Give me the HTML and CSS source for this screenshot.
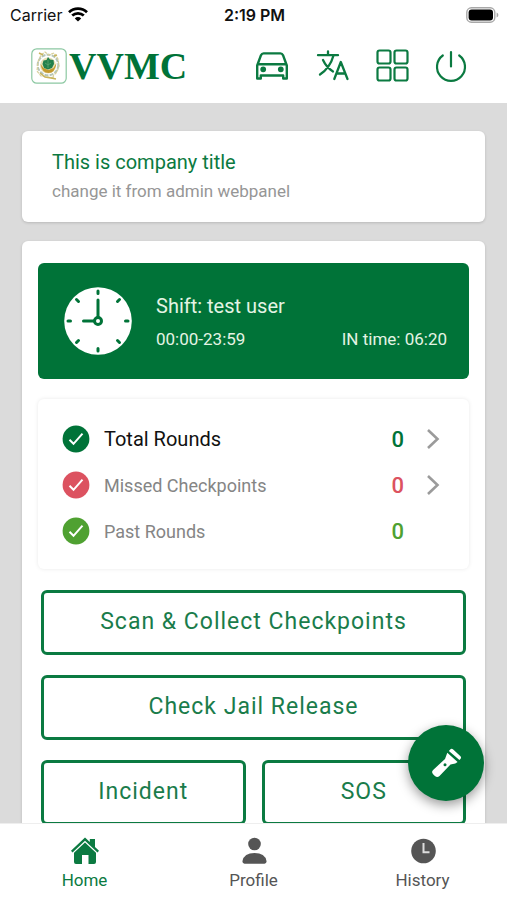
FILE: index.html
```html
<!DOCTYPE html>
<html lang="en">
<head>
<meta charset="utf-8">
<meta name="viewport" content="width=device-width, initial-scale=1">
<title>VVMC</title>
<link rel="stylesheet" href="styles.css">
</head>
<body>
<div class="app">
  <div class="status">
    <div class="carrier">
      <span>Carrier</span>
      <svg width="20" height="15" viewBox="0 0 20 15" fill="none" stroke="#000" stroke-width="2.7"><path d="M1 5.3a13 13 0 0 1 18 0M4.2 8.6a8.4 8.4 0 0 1 11.6 0"/><path d="M10 14.6 6.8 11.4a4.6 4.6 0 0 1 6.4 0z" fill="#000" stroke="none"/></svg>
    </div>
    <span class="time">2:19 PM</span>
    <svg class="battery" width="33" height="16" viewBox="0 0 33 16"><rect x=".8" y=".8" width="28" height="14.4" rx="4.6" fill="#fff" stroke="#a8a8a8" stroke-width="1.4"/><rect x="2.6" y="2.6" width="24.4" height="10.8" rx="3"/><path d="M30.6 5.6q1.8.6 1.8 2.4t-1.8 2.4z" fill="#a8a8a8"/></svg>
  </div>

  <header class="header">
    <div class="brand">
      <svg width="36" height="36" viewBox="0 0 36 36" fill="none">
        <rect x=".8" y=".8" width="34.4" height="34.4" rx="5" fill="#fff" stroke="#8cc8a2" stroke-width="1.2"/>
        <circle cx="17" cy="17" r="10.3" stroke="#b5c5b8" stroke-width="2" stroke-dasharray="4 1.2"/>
        <path d="M7 14 10 7l4-3 4 3 5-2 4 6 1 7-2 6-4 4 1 2-6-1-7-1-4-5z" stroke="#d8cf9a" stroke-width="1.2" stroke-dasharray="3 1"/>
        <path d="M8 5l4 2M26 7l-3 1M9 25l5 4 6 1 5 1" stroke="#c8b45c" stroke-width="1.6"/>
        <circle cx="17" cy="17.5" r="8" fill="#e9dfb4"/>
        <path d="M9.500 16q1.500 9 8 9t8-10l-3 5-5 2-5-2z" fill="#c49a2e"/>
        <path d="M17 9l2 2.500 3.500.5.500 4-2 4-4 1.500-4-1.500-1.500-4 1-3.500 3-.5z" fill="#23804b"/>
        <path d="M17 12v8M14 15l3 2 3-2" stroke="#5da66f" stroke-width=".8"/>
      </svg>
      <span class="brand-name">VVMC</span>
    </div>
    <nav class="tools" aria-label="Tools">
      <button type="button" aria-label="Vehicle"><svg width="36" height="36" viewBox="-1 0 36 36" fill="none" stroke="#0b7a41" stroke-width="2.4" stroke-linejoin="round"><path d="M3.200 17.500 7 7.200Q7.800 5.400 9.600 5.400h16.800q1.800 0 2.600 1.800l3.800 10.300V30.500h-3.600V27.500H6.800v3H3.200zM3.600 16.300h28.800"/><circle cx="9.200" cy="21.300" r="1.700" fill="#0b7a41"/><circle cx="26.800" cy="21.300" r="1.700" fill="#0b7a41"/></svg></button>
      <button type="button" aria-label="Language"><svg width="36" height="36" viewBox="-2 0 36 36" fill="none" stroke="#0b7a41" stroke-width="2.300" stroke-linecap="round" stroke-linejoin="round"><path d="M3 7.200h20M13 3.500v3.700M18.500 7.500Q15 20 5 26.500M8 12q3.500 7.500 10 11.500M19.300 31l6.500-17L32.500 31M22 25.500h8.200"/></svg></button>
      <button type="button" aria-label="Menu"><svg width="36" height="36" viewBox="-2 0 36 36" fill="none" stroke="#0b7a41" stroke-width="2.200"><rect x="2.500" y="2.500" width="13" height="13" rx="2"/><rect x="19.500" y="2.500" width="13" height="13" rx="2"/><rect x="2.500" y="19.500" width="13" height="13" rx="2"/><rect x="19.500" y="19.500" width="13" height="13" rx="2"/></svg></button>
      <button type="button" aria-label="Log out"><svg width="36" height="36" viewBox="0 0 36 36" fill="none" stroke="#0b7a41" stroke-width="2.200" stroke-linecap="round"><path d="M18 4v14.500M9.800 7.500a14 14 0 1 0 16.400 0"/></svg></button>
    </nav>
  </header>

  <main class="content">
    <section class="card company">
      <h1>This is company title</h1>
      <p>change it from admin webpanel</p>
    </section>

    <section class="card panel">
      <div class="shift">
        <svg width="68" height="68" viewBox="0 0 68 68" fill="none" stroke="#007338" stroke-width="3" stroke-linecap="round">
          <circle cx="34" cy="34" r="33.800" fill="#fff" stroke="none"/>
          <path d="M34 4v2.500M34 61.500V64M4 34h2.500M61.500 34H64M12.500 12.500l2 2M55.500 12.500l-2 2M12.500 55.500l2-2M55.500 55.500l-2-2M34 13v17M30 34H19.500"/>
          <circle cx="34" cy="34" r="3.500"/>
        </svg>
        <div class="shift-info">
          <h2>Shift: test user</h2>
          <div class="shift-times"><span>00:00-23:59</span><span>IN time: 06:20</span></div>
        </div>
      </div>

      <div class="stats">
        <a class="stat total" href="#total">
          <svg class="tick" width="28" height="28" viewBox="0 0 28 28"><circle cx="14" cy="14" r="13.400" fill="currentColor"/><path d="M7.500 14.800l4 4L20.500 8.700" fill="none" stroke="#fff" stroke-width="2"/></svg>
          <span class="label">Total Rounds</span><span class="count">0</span>
          <svg class="chevron" width="14" height="22" viewBox="0 0 14 22"><path d="M2 2l9.500 9L2 20"/></svg>
        </a>
        <a class="stat missed" href="#missed">
          <svg class="tick" width="28" height="28" viewBox="0 0 28 28"><circle cx="14" cy="14" r="13.400" fill="currentColor"/><path d="M7.500 14.800l4 4L20.500 8.700" fill="none" stroke="#fff" stroke-width="2"/></svg>
          <span class="label">Missed Checkpoints</span><span class="count">0</span>
          <svg class="chevron" width="14" height="22" viewBox="0 0 14 22"><path d="M2 2l9.500 9L2 20"/></svg>
        </a>
        <div class="stat past">
          <svg class="tick" width="28" height="28" viewBox="0 0 28 28"><circle cx="14" cy="14" r="13.400" fill="currentColor"/><path d="M7.500 14.800l4 4L20.500 8.700" fill="none" stroke="#fff" stroke-width="2"/></svg>
          <span class="label">Past Rounds</span><span class="count">0</span>
          <span class="chevron"></span>
        </div>
      </div>

      <div class="actions">
        <button type="button">Scan &amp; Collect Checkpoints</button>
        <button type="button">Check Jail Release</button>
        <div class="pair">
          <button type="button">Incident</button>
          <button type="button">SOS</button>
        </div>
      </div>
    </section>
  </main>

  <div class="bottom">
    <button class="fab" type="button" aria-label="Flashlight"><svg width="36" height="36" viewBox="0 0 36 36" fill="#fff"><path d="M22 4.800q1.500-1.800 3.200-.3l7 6.400q1.600 1.500.2 3.200l-1 1L20.900 5.900zM19.300 7.800l10.300 9.100-2.300 1.700-4.800.9L11.500 31q-2.200 2.100-4.600 0l-1.800-1.700q-2-2.200 0-4.400L17 14z"/><circle cx="17" cy="19.800" r="1.500" fill="#007338"/></svg></button>
    <nav class="tabs" aria-label="Main">
      <a class="active" href="#home"><svg width="30" height="30" viewBox="0 0 30 30" fill="currentColor"><path d="M15 1.500 19.800 6V3H25v8l4 3.700-1.500 1.700L15 4.800 2.500 16.400 1 14.700z"/><path d="M15 6.500 26 16.700V26q0 2-2 2h-5.500v-9h-6.500v9H6q-2 0-2-2v-9.300z"/></svg><span>Home</span></a>
      <a href="#profile"><svg width="30" height="30" viewBox="0 0 30 30" fill="currentColor"><circle cx="15.500" cy="8" r="6.300"/><path d="M3.500 25Q5 17 15.500 17T27.500 25q.3 2.700-2 2.700h-20q-2.300 0-2-2.700z"/></svg><span>Profile</span></a>
      <a href="#history"><svg width="30" height="30" viewBox="0 0 30 30"><circle cx="15.500" cy="15" r="12.300" fill="currentColor"/><path d="M15.500 7v9.200h6" fill="none" stroke="#ddd" stroke-width="2"/></svg><span>History</span></a>
    </nav>
  </div>
</div>
</body>
</html>
```
FILE: styles.css
```css
* { box-sizing: border-box; }
body {
  margin: 0;
  font-family: Roboto, sans-serif;
  background: #fff;
}
h1, h2, p { margin: 0; font-weight: 400; }
button { font: inherit; cursor: pointer; }
a { color: inherit; text-decoration: none; }
svg { display: block; flex: none; }

.app {
  height: 100vh;
  display: flex;
  flex-direction: column;
}

/* Status bar */
.status {
  flex: none;
  display: grid;
  grid-template-columns: 1fr auto 1fr;
  align-items: center;
  height: 29px;
  padding: 0 8px 0 10px;
  font: 400 16px/20px Inter, sans-serif;
  color: #111;
}
.carrier { display: flex; align-items: center; gap: 6px; }
.time { font-weight: 600; }
.battery { justify-self: end; }

/* Header */
.header {
  flex: none;
  display: flex;
  align-items: center;
  justify-content: space-between;
  height: 74px;
  padding: 0 38px 0 31px;
}
.brand { display: flex; align-items: center; gap: 2px; }
.brand-name {
  font: 700 38px/44px "Liberation Serif", serif;
  color: #007338;
}
.tools { display: flex; gap: 24px; }
.tools button { padding: 0; border: 0; background: none; }

/* Scrolling content */
.content {
  flex: 1;
  min-height: 0;
  overflow: hidden;
  display: flex;
  flex-direction: column;
  gap: 19px;
  padding: 28px 22px 0;
  background: #dbdbdb;
}
.card {
  flex: none;
  border-radius: 6px;
  background: #fff;
  box-shadow: 0 1px 3px rgba(0, 0, 0, .16);
}
.company { padding: 17px 30px 15px; }
.company h1 { font-size: 20px; line-height: 28px; color: #0b7a41; }
.company p { font-size: 17px; line-height: 31px; color: #969696; }
.panel { padding: 22px 16px; }

.shift {
  display: flex;
  align-items: center;
  gap: 24px;
  min-height: 116px;
  padding: 0 22px 0 26px;
  border-radius: 6px;
  background: #007338;
  color: #e4f4e4;
}
.shift-info { flex: 1; }
.shift h2 { font-size: 20px; line-height: 36px; }
.shift-times {
  display: flex;
  justify-content: space-between;
  font-size: 17px;
  line-height: 31px;
}

.stats {
  margin-top: 20px;
  padding: 17px 29px 15px 24px;
  border-radius: 6px;
  box-shadow: 0 0 4px rgba(0, 0, 0, .09);
}
.stat {
  display: flex;
  align-items: center;
  min-height: 46px;
  font-size: 18px;
}
.label { flex: 1; margin-left: 14px; color: #858585; }
.count { font-size: 22px; font-weight: 500; }
.chevron {
  width: 14px;
  margin-left: 22px;
  fill: none;
  stroke: #9b9b9b;
  stroke-width: 2.6;
}
.total { font-size: 20px; color: #007338; }
.total .label { color: #111; }
.missed { color: #dc5260; }
.past { color: #4fa131; }

.actions {
  display: flex;
  flex-direction: column;
  gap: 20px;
  padding: 0 3px;
  margin-top: 21px;
}
.actions button {
  height: 65px;
  padding: 0 6px 2px;
  border: 3px solid #0b7a41;
  border-radius: 6px;
  background: #fff;
  color: #1a7c4b;
  font-size: 23px;
  letter-spacing: 1px;
}
.pair { display: grid; grid-template-columns: 1fr 1fr; gap: 16px; }

/* Bottom navigation */
.bottom {
  flex: none;
  position: relative;
  background: #fff;
  border-top: 1px solid #eee;
}
.fab {
  position: absolute;
  right: 23px;
  bottom: 99px;
  display: grid;
  place-items: center;
  width: 76px;
  height: 76px;
  padding: 0;
  border: 0;
  border-radius: 50%;
  background: #007338;
  box-shadow: 0 4px 12px rgba(0, 0, 0, .4);
}
.tabs {
  display: grid;
  grid-template-columns: repeat(3, 1fr);
  height: 76px;
  padding-top: 12px;
}
.tabs a {
  display: flex;
  flex-direction: column;
  align-items: center;
  gap: 2px;
  font-size: 17px;
  line-height: 24px;
  color: #555;
}
.tabs .active { color: #0b7a41; }
```
